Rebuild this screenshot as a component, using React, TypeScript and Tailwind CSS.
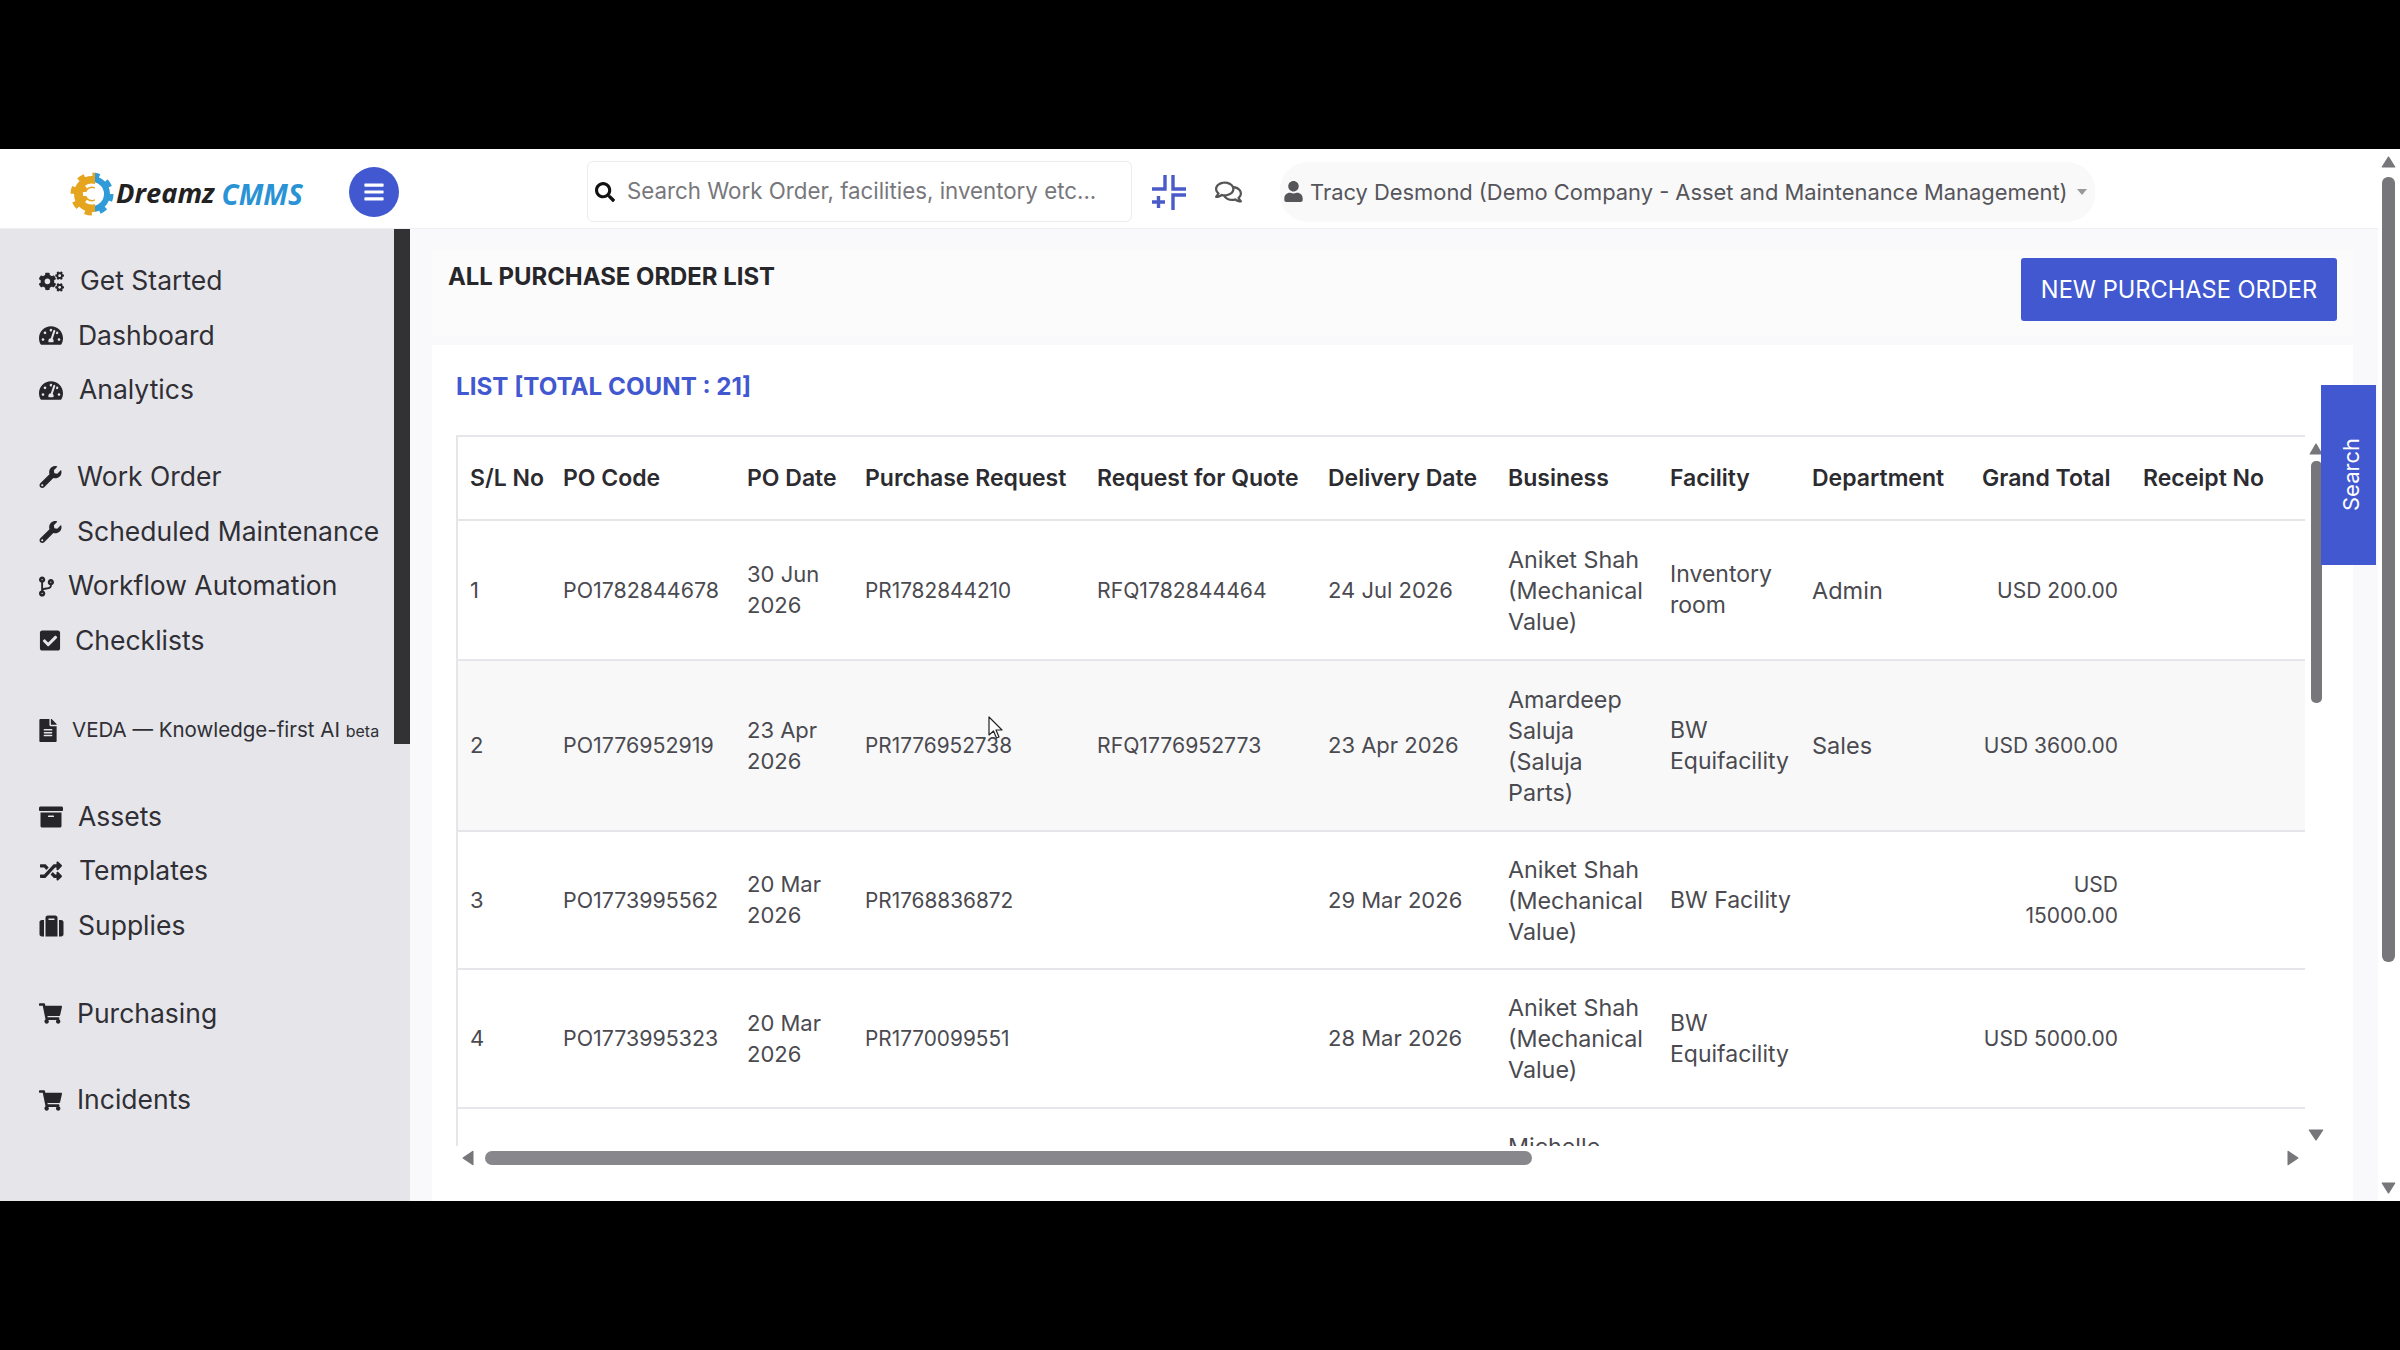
import type { ReactNode } from "react";
import { FaArchive, FaBars, FaCheckSquare, FaCodeBranch, FaCogs, FaFileAlt, FaRandom, FaRegComments, FaSearch, FaShoppingCart, FaSuitcase, FaTachometerAlt, FaUser, FaWrench } from "react-icons/fa";

type NavItem = { label: ReactNode; icon: ReactNode; slot: string; text?: string };

const navGroups: { top: string; items: NavItem[] }[] = [
  {
    top: "",
    items: [
      { label: "Get Started", icon: <FaCogs className="w-[25px] h-[23px]" />, slot: "w-[41px]" },
      { label: "Dashboard", icon: <FaTachometerAlt className="w-[24px] h-[23px]" />, slot: "w-[39px]" },
      { label: "Analytics", icon: <FaTachometerAlt className="w-[24px] h-[23px]" />, slot: "w-[40px]" },
    ],
  },
  {
    top: "mt-[32.5px]",
    items: [
      { label: "Work Order", icon: <FaWrench className="w-[23px] h-[22px]" />, slot: "w-[38px]" },
      { label: "Scheduled Maintenance", icon: <FaWrench className="w-[23px] h-[22px]" />, slot: "w-[38px]" },
      { label: "Workflow Automation", icon: <FaCodeBranch className="w-[15px] h-[23px]" />, slot: "w-[29px]" },
      { label: "Checklists", icon: <FaCheckSquare className="w-[22px] h-[23px]" />, slot: "w-[36px]" },
    ],
  },
  {
    top: "mt-[35px]",
    items: [
      {
        label: (
          <>
            VEDA — Knowledge-first AI <span className="text-[16px]">beta</span>
          </>
        ),
        icon: <FaFileAlt className="w-[18px] h-[23px]" />,
        slot: "w-[33px]",
        text: "text-[20.5px]",
      },
    ],
  },
  {
    top: "mt-[32px]",
    items: [
      { label: "Assets", icon: <FaArchive className="w-[24px] h-[24px]" />, slot: "w-[39px]" },
      { label: "Templates", icon: <FaRandom className="w-[24px] h-[22px]" />, slot: "w-[40px]" },
      { label: "Supplies", icon: <FaSuitcase className="w-[25px] h-[24px]" />, slot: "w-[39px]" },
    ],
  },
  { top: "mt-[33.5px]", items: [{ label: "Purchasing", icon: <FaShoppingCart className="w-[23px] h-[21px]" />, slot: "w-[38px]" }] },
  { top: "mt-[32px]", items: [{ label: "Incidents", icon: <FaShoppingCart className="w-[23px] h-[21px]" />, slot: "w-[38px]" }] },
];

const columns = [
  { name: "S/L No", width: "w-[93px]", cell: "px-[14px] text-[22px]" },
  { name: "PO Code", width: "w-[184px]", cell: "px-[14px] text-[21.4px]" },
  { name: "PO Date", width: "w-[118px]", cell: "px-[14px] text-[22px]" },
  { name: "Purchase Request", width: "w-[232px]", cell: "px-[14px] text-[20.8px]" },
  { name: "Request for Quote", width: "w-[231px]", cell: "px-[14px] text-[21.2px]" },
  { name: "Delivery Date", width: "w-[180px]", cell: "px-[14px] text-[22px]" },
  { name: "Business", width: "w-[162px]", cell: "px-[14px] text-[23.3px]" },
  { name: "Facility", width: "w-[142px]", cell: "pl-[14px] pr-[6px] text-[23px]" },
  { name: "Department", width: "w-[170px]", cell: "px-[14px] text-[23.5px]" },
  { name: "Grand Total", width: "w-[161px]", cell: "pl-[10px] pr-[11px] text-right text-[21px]" },
  { name: "Receipt No", width: "w-[176px]", cell: "px-[14px] text-[22px]" },
];

const rows = [
  { h: "h-[140px]", bg: "", cells: ["1", "PO1782844678", "30 Jun 2026", "PR1782844210", "RFQ1782844464", "24 Jul 2026", "Aniket Shah (Mechanical Value)", "Inventory room", "Admin", "USD 200.00", ""] },
  { h: "h-[171px]", bg: "bg-[#f8f8f9]", cells: ["2", "PO1776952919", "23 Apr 2026", "PR1776952738", "RFQ1776952773", "23 Apr 2026", "Amardeep Saluja (Saluja Parts)", "BW Equifacility", "Sales", "USD 3600.00", ""] },
  { h: "h-[138px]", bg: "", cells: ["3", "PO1773995562", "20 Mar 2026", "PR1768836872", "", "29 Mar 2026", "Aniket Shah (Mechanical Value)", "BW Facility", "", "USD 15000.00", ""] },
  { h: "h-[139px]", bg: "", cells: ["4", "PO1773995323", "20 Mar 2026", "PR1770099551", "", "28 Mar 2026", "Aniket Shah (Mechanical Value)", "BW Equifacility", "", "USD 5000.00", ""] },
  { h: "h-[139px]", bg: "", cells: ["", "", "", "", "", "", "Michelle", "", "", "", ""] },
];

function Arrow({ dir, className }: { dir: "up" | "down" | "left" | "right"; className?: string }) {
  const points = { up: "6,1 11,11 1,11", down: "1,1 11,1 6,11", left: "11,1 11,11 1,6", right: "1,1 1,11 11,6" }[dir];
  return (
    <svg viewBox="0 0 12 12" preserveAspectRatio="none" className={className}>
      <polygon points={points} fill="#77777b" stroke="#77777b" strokeLinejoin="round" />
    </svg>
  );
}

function Logo() {
  return (
    <div className="flex items-center mt-[4px]">
      <svg viewBox="0 0 44 44" className="w-[44px] h-[44px] shrink-0">
        <defs>
          <clipPath id="leftPart">
            <rect x="0" y="0" width="25" height="44" />
          </clipPath>
          <clipPath id="rightPart">
            <rect x="25" y="0" width="19" height="44" />
          </clipPath>
        </defs>
        <g clipPath="url(#rightPart)" fill="none" stroke="#2f9bd8">
          <circle cx="22" cy="22" r="15" strokeWidth="6" />
          <circle cx="22" cy="22" r="19" strokeWidth="5" strokeDasharray="7 7.9" />
        </g>
        <g clipPath="url(#leftPart)" fill="none" stroke="#e6a51f">
          <circle cx="22" cy="22" r="12" strokeWidth="12" />
          <circle cx="22" cy="22" r="19" strokeWidth="5" strokeDasharray="7 7.9" />
        </g>
        <path d="M16 15 a9 9 0 1 1 0 14" fill="none" stroke="#fff" strokeWidth="3" />
        <rect x="13" y="20" width="10" height="4" fill="#fff" />
      </svg>
      <span className="ml-[2px] font-['Open_Sans',sans-serif] italic font-bold text-[27.3px] text-[#222]">Dreamz</span>
      <span className="ml-[7px] font-['Open_Sans',sans-serif] italic font-bold text-[28px] text-[#2a93d5]">CMMS</span>
    </div>
  );
}

function CompressIcon() {
  return (
    <svg viewBox="0 0 38 38" className="w-[38px] h-[38px]" fill="none" stroke="#4a5bc9" strokeWidth="3.4">
      <path d="M15 2 V16 H2" />
      <path d="M23 2 V16 H36" />
      <path d="M2 29 H15 M8.5 23 V35" />
      <path d="M36 22 H23 V37" />
    </svg>
  );
}

function Sidebar() {
  return (
    <aside className="relative w-[410px] shrink-0 bg-[#e5e5ea] pt-[25px]">
      <div className="absolute right-0 top-0 w-[16px] h-[515px] bg-[#323234]" />
      {navGroups.map((group, i) => (
        <div key={i} className={group.top}>
          {group.items.map((item, j) => (
            <div key={j} className={`flex items-center h-[54.5px] pl-[39px] text-[#2f2f35] ${item.text ?? "text-[26.5px]"}`}>
              <span className={`flex items-center shrink-0 text-[#26262a] ${item.slot}`}>{item.icon}</span>
              <span className="whitespace-nowrap">{item.label}</span>
            </div>
          ))}
        </div>
      ))}
    </aside>
  );
}

function PurchaseTable() {
  return (
    <div className="w-[1849px] h-[711px] overflow-hidden border-l-2 border-t-2 border-[#e6e6ea]">
      <table className="table-fixed w-[1849px] -ml-[2px] border-collapse leading-[31px] text-[#4a4a50]">
        <colgroup>
          {columns.map((col) => (
            <col key={col.name} className={col.width} />
          ))}
        </colgroup>
        <thead>
          <tr className="h-[83px] border-b-2 border-[#e6e6ea]">
            {columns.map((col) => (
              <th key={col.name} className="px-[14px] text-left text-[23px] font-semibold text-[#2b2b30] whitespace-nowrap">
                {col.name}
              </th>
            ))}
          </tr>
        </thead>
        <tbody>
          {rows.map((row, r) => (
            <tr key={r} className={`${row.h} ${row.bg} border-b-2 border-[#e6e6ea]`}>
              {row.cells.map((cell, c) => (
                <td key={c} className={`${columns[c].cell} ${r === 4 ? "align-top pt-[22px]" : ""}`}>
                  {cell}
                </td>
              ))}
            </tr>
          ))}
        </tbody>
      </table>
    </div>
  );
}

export default function App() {
  return (
    <div className="h-screen bg-black flex flex-col font-['Inter',sans-serif] overflow-hidden">
      <div className="h-[149px] shrink-0" />
      <div className="h-[1052px] shrink-0 flex bg-white relative">
        <div className="flex-1 min-w-0 flex flex-col">
          <header className="h-[80px] shrink-0 flex items-center pt-[6px] bg-white border-b border-[#efeff1]">
            <div className="w-[349px] pl-[70px] shrink-0">
              <Logo />
            </div>
            <button className="w-[50px] h-[50px] shrink-0 rounded-full bg-[#4158d0] text-white flex items-center justify-center">
              <FaBars className="w-[22px] h-[22px]" />
            </button>
            <div className="ml-[188px] w-[545px] h-[61px] shrink-0 flex items-center rounded-[6px] border border-[#ececef] pl-[7px]">
              <FaSearch className="w-[20px] h-[20px] text-[#111] shrink-0" />
              <span className="ml-[12px] mb-[1px] text-[22.3px] text-[#77777c] whitespace-nowrap">Search Work Order, facilities, inventory etc...</span>
            </div>
            <div className="ml-[18px] shrink-0">
              <CompressIcon />
            </div>
            <FaRegComments className="ml-[27px] w-[27px] h-[24px] text-[#555] shrink-0" />
            <div className="ml-[38px] w-[815px] h-[60px] shrink-0 rounded-[28px] bg-[#f9f9fa] flex items-center pl-[4px] text-[#55555a]">
              <FaUser className="w-[19px] h-[21px] shrink-0" />
              <span className="ml-[7px] mt-[2px] text-[21.9px] whitespace-nowrap">Tracy Desmond (Demo Company - Asset and Maintenance Management)</span>
              <svg viewBox="0 0 10 6" className="ml-[9px] w-[10px] h-[6px] shrink-0">
                <polygon points="0,0 10,0 5,6" fill="#999" />
              </svg>
            </div>
          </header>
          <div className="flex-1 min-h-0 flex">
            <Sidebar />
            <main className="flex-1 min-w-0 bg-[#f9f9fc] pl-[22px] pr-[25px] pt-[21px] flex flex-col">
              <section className="h-[86px] shrink-0 bg-[#fbfbfc] pl-[16px] pr-[16px] flex justify-between">
                <h1 className="mt-[9px] text-[23.9px] font-bold text-[#26262b]">ALL PURCHASE ORDER LIST</h1>
                <button className="mt-[8px] w-[316px] h-[63px] rounded-[3px] bg-[#4158d0] text-white text-[23.6px] whitespace-nowrap">NEW PURCHASE ORDER</button>
              </section>
              <section className="relative flex-1 min-h-0 mt-[9px] bg-white pl-[24px]">
                <h2 className="pt-[24px] h-[90px] text-[24.2px] font-bold text-[#4158d0]">LIST [TOTAL COUNT : 21]</h2>
                <div className="flex">
                  <PurchaseTable />
                  <div className="ml-[5px] w-[12px] flex flex-col items-center">
                    <Arrow dir="up" className="w-[14px] h-[12px] mt-[8px] shrink-0" />
                    <div className="mt-[6px] w-[11px] h-[242px] rounded-[5px] bg-[#77777b]" />
                    <Arrow dir="down" className="w-[16px] h-[12px] mt-[426px] shrink-0" />
                  </div>
                </div>
                <div className="flex items-center h-[14px] mt-[5px] w-[1849px]">
                  <Arrow dir="left" className="ml-[6px] w-[12px] h-[16px] shrink-0" />
                  <div className="ml-[11px] w-[1047px] h-[14px] rounded-[7px] bg-[#88888c]" />
                  <Arrow dir="right" className="ml-auto mr-[6px] w-[12px] h-[16px] shrink-0" />
                </div>
                <div className="absolute left-[1889px] top-[40px] w-[55px] h-[180px] bg-[#4158d0] flex items-center justify-center pl-[6px]">
                  <span className="[writing-mode:vertical-rl] rotate-180 text-[22px] text-white">Search</span>
                </div>
              </section>
            </main>
          </div>
        </div>
        <div className="w-[22px] shrink-0 flex flex-col items-center pr-[1px]">
          <Arrow dir="up" className="w-[15px] h-[12px] mt-[7px] shrink-0" />
          <div className="mt-[9px] w-[13px] h-[785px] rounded-[6px] bg-[#77777b]" />
          <Arrow dir="down" className="w-[15px] h-[12px] mt-auto mb-[7px] shrink-0" />
        </div>
        <svg viewBox="0 0 16 24" className="absolute left-[988px] top-[567px] w-[16px] h-[24px]">
          <path d="M1 1 V19 L5.5 15 L8.5 22 L11 21 L8 14 H14 Z" fill="#fff" stroke="#222" strokeWidth="1.2" strokeLinejoin="round" />
        </svg>
      </div>
      <div className="flex-1" />
    </div>
  );
}
